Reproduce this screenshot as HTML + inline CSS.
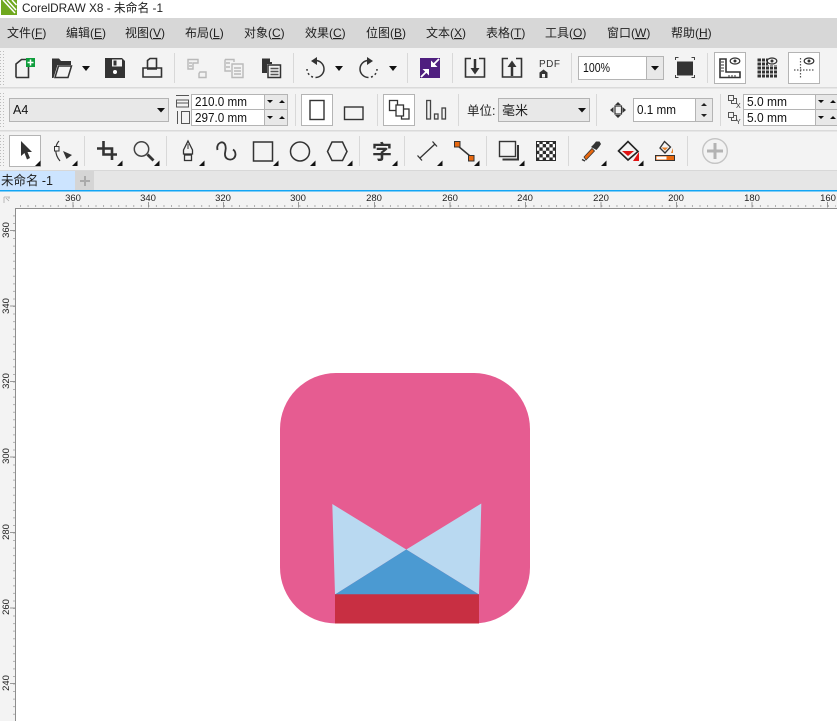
<!DOCTYPE html>
<html><head><meta charset="utf-8">
<style>
html,body{margin:0;padding:0;background:#fff;width:837px;height:721px;overflow:hidden}
svg{display:block}
text{font-family:"Liberation Sans","Noto Sans CJK SC",sans-serif;fill:#222}
.m{font-size:12px}
.m tspan{text-decoration:underline}
.n{font-size:12.5px;fill:#111}
.r{font-size:9.5px;fill:#999}
.s{stroke:#333;stroke-width:1.6;fill:none}
.g{stroke:#b9b9b9;stroke-width:1.4;fill:none}
.l{fill:#d8d8d8}
.b{fill:#fff;stroke:#b4b4b4;stroke-width:1}
</style></head>
<body>
<svg width="837" height="721" viewBox="0 0 837 721" xmlns="http://www.w3.org/2000/svg">
<defs>
<path id="c" d="M0 5H5.500V-.5z" fill="#111"/>
<pattern id="grip" width="3" height="3" patternUnits="userSpaceOnUse"><rect width="1" height="1" fill="#bdbdbd"/></pattern>
<pattern id="chk" width="6.700" height="6.700" patternUnits="userSpaceOnUse"><rect width="6.700" height="6.700" fill="#2b2b2b"/><rect width="3.350" height="3.350" fill="#fff"/><rect x="3.350" y="3.350" width="3.350" height="3.350" fill="#fff"/></pattern>
</defs>

<!-- base -->
<rect width="837" height="721" fill="#fff"/>
<!-- title bar -->
<rect x="1" y="0" width="16" height="15" fill="#6fa81e"/>
<path d="M3 0L15 13M7 0L16 10M12 0L16.500 5" stroke="#fff" stroke-width="1.500" fill="none"/>
<text x="22" y="12" style="font-size:12px" fill="#111" textLength="141" lengthAdjust="spacingAndGlyphs">CorelDRAW X8 - 未命名 -1</text>

<!-- menu -->
<rect y="18" width="837" height="30" fill="#d7d7d7"/>
<g class="m">
<text x="7" y="37">文件(<tspan>F</tspan>)</text>
<text x="66" y="37">编辑(<tspan>E</tspan>)</text>
<text x="125" y="37">视图(<tspan>V</tspan>)</text>
<text x="185" y="37">布局(<tspan>L</tspan>)</text>
<text x="244" y="37">对象(<tspan>C</tspan>)</text>
<text x="305" y="37">效果(<tspan>C</tspan>)</text>
<text x="366" y="37">位图(<tspan>B</tspan>)</text>
<text x="426" y="37">文本(<tspan>X</tspan>)</text>
<text x="486" y="37">表格(<tspan>T</tspan>)</text>
<text x="545" y="37">工具(<tspan>O</tspan>)</text>
<text x="607" y="37">窗口(<tspan>W</tspan>)</text>
<text x="671" y="37">帮助(<tspan>H</tspan>)</text>
</g>

<!-- toolbars background -->
<rect y="48" width="837" height="122" fill="#f3f3f3"/>
<rect y="87" width="837" height="1.500" fill="#dadada"/>
<rect y="130" width="837" height="1.500" fill="#dadada"/>
<rect y="50" width="6" height="36" fill="url(#grip)"/>
<rect y="92" width="6" height="36" fill="url(#grip)"/>
<rect y="133" width="6" height="35" fill="url(#grip)"/>

<!-- row1 separators -->
<g class="l">
<rect x="174" y="53" width="1" height="30"/><rect x="293" y="53" width="1" height="30"/><rect x="407" y="53" width="1" height="30"/><rect x="452" y="53" width="1" height="30"/><rect x="571" y="53" width="1" height="30"/><rect x="707" y="53" width="1" height="30"/>
</g>
<!-- new -->
<path class="s" d="M16 77.500V64L21.500 59.500H26M28.500 67V77.500H16"/>
<rect x="26" y="58" width="9" height="9" fill="#0f9d3c"/>
<path d="M30.500 59.500V65.500M27.500 62.500H33.500" stroke="#fff" stroke-width="1.500"/>
<!-- open -->
<path d="M52 78V58.500H59L61 61H71V65H57.500L53.500 78z" fill="#333"/>
<path d="M55 77.500L58.500 66H71.500L68 77.500z" fill="#f3f3f3" stroke="#333" stroke-width="1.500"/>
<path d="M82 66H90L86 71z" fill="#111"/>
<!-- save -->
<path d="M105 58H122L125 61V78H105z" fill="#333"/>
<rect x="112" y="59.500" width="10" height="7" fill="#f3f3f3"/><rect x="113.500" y="60.500" width="3" height="5" fill="#333"/>
<circle cx="115" cy="72" r="2" fill="#fff"/>
<!-- print -->
<path class="s" d="M147.500 68V60.500L150 58.500H156.500V68M143 68H147M157 68H161.500V77H143V68z"/>
<path d="M147 69H157" stroke="#333" stroke-width="1.500"/>
<!-- disabled -->
<g class="g">
<path d="M188 59.500H198V63H193V69H188z"/><path d="M189 63H192M189 66H192"/><path d="M200 72H206V77.500H199V73.500z"/>
<path d="M225 59.500H234V62M225 59.500V71H231M226 63H230M226 67H230"/><path d="M232 64H243V77.500H232z"/><path d="M234 68H241M234 71H241M234 74H241"/>
</g>
<path d="M262 58.500H270V62H272V64H267V73H262z" fill="#333"/>
<rect x="268" y="65" width="12.500" height="12.500" fill="#f3f3f3" stroke="#333" stroke-width="1.500"/>
<path d="M270.500 68.500H278.500M270.500 71.500H278.500M270.500 74.500H278.500" stroke="#555" stroke-width="1.500"/>
<!-- undo/redo -->
<path d="M315.500 60.500A8.500 8.500 0 0 1 315.500 77.500" fill="none" stroke="#333" stroke-width="1.500"/>
<path d="M313 77.100A8.500 8.500 0 0 1 307 69" fill="none" stroke="#333" stroke-width="1.500" stroke-dasharray="2 2.500"/>
<path d="M317 57V65L311 61z" fill="#333"/>
<path d="M335 66H343L339 71z" fill="#111"/>
<path d="M368.500 60.500A8.500 8.500 0 0 0 368.500 77.500" fill="none" stroke="#333" stroke-width="1.500"/>
<path d="M371 77.100A8.500 8.500 0 0 0 377 69" fill="none" stroke="#333" stroke-width="1.500" stroke-dasharray="2 2.500"/>
<path d="M367 57V65L373 61z" fill="#333"/>
<path d="M389 66H397L393 71z" fill="#111"/>
<!-- purple -->
<rect x="420" y="58" width="20" height="20" fill="#4f1f7f"/>
<path d="M421 77L426 72M439 59L434 64" stroke="#fff" stroke-width="1.800"/>
<path d="M431 67V60.500L437.500 67z" fill="#fff"/>
<path d="M429 69V75.500L422.500 69z" fill="#fff"/>
<!-- import export pdf -->
<path class="s" d="M471 58.500H465.500V77H484.500V58.500H479"/>
<path d="M475 59V70" stroke="#333" stroke-width="2.500"/><path d="M470.500 68H479.500L475 74.500z" fill="#333"/>
<path class="s" d="M508 58.500H502.500V77H521.500V58.500H516"/>
<path d="M512 66V76" stroke="#333" stroke-width="2.500"/><path d="M507.500 67H516.500L512 60.500z" fill="#333"/>
<text x="539" y="67" style="font-size:10px;letter-spacing:.5px;fill:#333">PDF</text>
<path d="M539.500 78V72.500L543.500 69.500L547.500 72.500V78z" fill="#333"/><rect x="542" y="74" width="3" height="3.500" fill="#f3f3f3"/>
<!-- zoom box -->
<rect x="578.500" y="56.500" width="68" height="23" fill="#fff" stroke="#b4b4b4"/>
<rect x="646.500" y="56.500" width="17" height="23" fill="#e8e8e8" stroke="#b4b4b4"/>
<path d="M651 66H659L655 70.500z" fill="#111"/>
<text x="583" y="72" class="n" textLength="27" lengthAdjust="spacingAndGlyphs">100%</text>
<!-- fullscreen -->
<rect x="677" y="61.500" width="16" height="14" fill="#333"/>
<path d="M675.500 60V57.500H678.500M691.500 57.500H694.500V60M694.500 75V77.500H691.500M678.500 77.500H675.500V75" fill="none" stroke="#444" stroke-width="1"/>
<!-- toggles -->
<rect x="714.500" y="52.500" width="31" height="31" class="b"/>
<path class="s" d="M720 59V77.500H740V72H726V59z" stroke-width="1.400"/>
<path d="M721 62H724M721 65H724M721 68H724M721 71H724M729 75V77M732 75V77M735 75V77" stroke="#333"/>
<ellipse cx="735" cy="61" rx="4.800" ry="3" fill="none" stroke="#333" stroke-width="1.200"/><circle cx="735" cy="61" r="1.500" fill="#333"/>
<path d="M757.500 58.500H768V65H777V77.500H757.500z" fill="#333"/>
<path d="M757 62H777M757 66H777M757 70H777M757 74H777M761.500 58V78M765.500 58V78M769.500 65V78M773.500 65V78" stroke="#f3f3f3" stroke-width="1"/>
<ellipse cx="772" cy="61" rx="4.800" ry="3" fill="none" stroke="#333" stroke-width="1.200"/><circle cx="772" cy="61" r="1.500" fill="#333"/>
<rect x="788.500" y="52.500" width="31" height="31" class="b"/>
<path d="M800.500 58V78M794 70H814" stroke="#555" stroke-width="1.200" stroke-dasharray="1.500 1.500"/>
<ellipse cx="809" cy="61" rx="4.800" ry="3" fill="none" stroke="#333" stroke-width="1.200"/><circle cx="809" cy="61" r="1.500" fill="#333"/>

<!-- row 2 -->
<rect x="9.500" y="98.500" width="159" height="23" fill="#e8e8e8" stroke="#b4b4b4"/>
<text x="13" y="114" class="n">A4</text>
<path d="M157 108H165L161 112.500z" fill="#111"/>
<path d="M176 95.500H189M176.500 100H188.500V107H176.500zM176.500 103H188.500" stroke="#555" fill="none"/>
<path d="M177.500 111V124M181.500 111.500H189.500V123.500H181.500z" stroke="#555" fill="none"/>
<rect x="191.500" y="94.500" width="73" height="15" fill="#fff" stroke="#b4b4b4"/>
<rect x="191.500" y="109.500" width="73" height="16" fill="#fff" stroke="#b4b4b4"/>
<rect x="264.500" y="94.500" width="23" height="31" fill="#e8e8e8" stroke="#b4b4b4"/>
<path d="M264.500 109.500H287.500" stroke="#b4b4b4"/>
<text x="195" y="106" class="n" textLength="52" lengthAdjust="spacingAndGlyphs">210.0 mm</text>
<text x="195" y="122" class="n" textLength="52" lengthAdjust="spacingAndGlyphs">297.0 mm</text>
<path d="M267 100H273L270 103zM279 103H285L282 100zM267 116H273L270 119zM279 119H285L282 116z" fill="#111"/>
<rect x="295" y="94" width="1" height="32" class="l"/>
<rect x="301.500" y="94.500" width="31" height="31" class="b"/>
<rect x="310" y="100.500" width="14" height="19" fill="none" stroke="#333" stroke-width="1.400"/>
<rect x="344.500" y="107" width="18.500" height="12.500" fill="none" stroke="#333" stroke-width="1.400"/>
<rect x="377" y="94" width="1" height="32" class="l"/>
<rect x="383.500" y="94.500" width="31" height="31" class="b"/>
<rect x="389.500" y="100.500" width="8" height="10" fill="#fff" stroke="#333" stroke-width="1.300"/>
<rect x="401.500" y="109" width="7.500" height="10" fill="#fff" stroke="#333" stroke-width="1.300"/>
<rect x="396" y="105" width="7.500" height="11" fill="#fff" stroke="#333" stroke-width="1.300"/>
<rect x="426.700" y="100.500" width="3.800" height="18.500" fill="none" stroke="#444" stroke-width="1.300"/>
<rect x="434.500" y="114" width="3.500" height="5" fill="none" stroke="#444" stroke-width="1.300"/>
<rect x="442" y="108" width="3.500" height="11" fill="none" stroke="#444" stroke-width="1.300"/>
<rect x="458" y="94" width="1" height="32" class="l"/>
<text x="467" y="115" style="font-size:12.500px">单位:</text>
<rect x="498.500" y="98.500" width="91" height="23" fill="#e8e8e8" stroke="#b4b4b4"/>
<text x="502" y="115" style="font-size:13px">毫米</text>
<path d="M578 108H586L582 112.500z" fill="#111"/>
<rect x="596" y="94" width="1" height="32" class="l"/>
<rect x="615" y="106" width="6.500" height="8" fill="none" stroke="#333" stroke-width="1.200"/>
<path d="M618 102L621 105H615zM618 118L621 115H615zM610 110L613.500 107V113zM626 110L622.500 107V113z" fill="#333"/>
<rect x="633.500" y="98.500" width="62" height="23" fill="#fff" stroke="#b4b4b4"/>
<rect x="695.500" y="98.500" width="17" height="23" fill="#e8e8e8" stroke="#b4b4b4"/>
<text x="637" y="114" class="n" textLength="39" lengthAdjust="spacingAndGlyphs">0.1 mm</text>
<path d="M701 106H707L704 103zM701 114H707L704 117z" fill="#222"/>
<rect x="720" y="94" width="1" height="32" class="l"/>
<path d="M728.500 95.500H733.500V100.500H728.500zM731.500 100.500V103.500H736.500V98.500H733.500M728.500 112.500H733.500V117.500H728.500zM731.500 117.500V120.500H736.500V115.500H733.500" fill="none" stroke="#555"/>
<text x="736" y="108" style="font-size:7px;fill:#333">X</text>
<text x="736" y="124" style="font-size:7px;fill:#333">Y</text>
<rect x="743.500" y="94.500" width="72" height="15" fill="#fff" stroke="#b4b4b4"/>
<rect x="743.500" y="109.500" width="72" height="16" fill="#fff" stroke="#b4b4b4"/>
<rect x="815.500" y="94.500" width="23" height="31" fill="#e8e8e8" stroke="#b4b4b4"/>
<path d="M815.500 109.500H838" stroke="#b4b4b4"/>
<text x="747" y="106" class="n" textLength="40" lengthAdjust="spacingAndGlyphs">5.0 mm</text>
<text x="747" y="122" class="n" textLength="40" lengthAdjust="spacingAndGlyphs">5.0 mm</text>
<path d="M818 100H824L821 103zM830 103H836L833 100zM818 116H824L821 119zM830 119H836L833 116z" fill="#111"/>

<!-- row 3 -->
<rect x="9.500" y="135.500" width="31" height="31" class="b"/>
<path d="M21 141V156L24.500 153L27 159.500L30 158L27.500 152H32z" fill="#333"/>
<g class="l">
<rect x="84" y="136" width="1" height="30"/><rect x="166" y="136" width="1" height="30"/><rect x="359" y="136" width="1" height="30"/><rect x="404" y="136" width="1" height="30"/><rect x="486" y="136" width="1" height="30"/><rect x="568" y="136" width="1" height="30"/><rect x="687" y="136" width="1" height="30"/>
</g>
<path d="M59 141C55 145 54 154 60 161" fill="none" stroke="#333" stroke-width="1.200"/>
<rect x="54.500" y="146.500" width="4.500" height="4.500" fill="#f3f3f3" stroke="#333"/>
<path d="M63 151L72 155L66.500 159z" fill="#333"/>
<path d="M97 148.500H112V160M103.500 141V154.500H117" fill="none" stroke="#333" stroke-width="2.600"/>
<circle cx="141.500" cy="149" r="7.200" fill="none" stroke="#444" stroke-width="1.500"/>
<path d="M147.500 154.500L153.500 160.500" stroke="#333" stroke-width="2.800"/>
<path d="M188 141L192.500 150V154H183.500V150z" fill="none" stroke="#333" stroke-width="1.300"/>
<path d="M188 144V149" stroke="#333"/>
<rect x="184.500" y="155" width="7" height="5.500" fill="none" stroke="#333" stroke-width="1.300"/>
<path d="M217.500 150C215.500 143 224 139 225.500 146C226.500 150 224.500 152 225 155C225.500 161 235 161.500 235.500 154.500C235.500 152 234.500 150.500 233 149.500" fill="none" stroke="#333" stroke-width="1.800"/>
<rect x="253.500" y="142" width="19" height="19" fill="none" stroke="#333" stroke-width="1.500"/>
<circle cx="300" cy="151.500" r="9.500" fill="none" stroke="#333" stroke-width="1.500"/>
<path d="M332 142H342.500L347 151.500L342.500 160.500H332L327.500 151.500z" fill="none" stroke="#333" stroke-width="1.500"/>
<text x="372" y="159" style="font-size:20px;font-weight:700;fill:#333">字</text>
<path d="M420 158L435 144M417.500 155.500L422 160.500M432.500 141.500L437 146.500" fill="none" stroke="#333" stroke-width="1.300"/>
<path d="M458 146L470 156" stroke="#333" stroke-width="1.500"/>
<rect x="454.500" y="141.500" width="5.500" height="5.500" fill="#e8680f" stroke="#333"/>
<rect x="468.500" y="155.500" width="5.500" height="5.500" fill="#e8680f" stroke="#333"/>
<rect x="499.500" y="141.500" width="16" height="15" fill="#f3f3f3" stroke="#333" stroke-width="1.400"/>
<path d="M517 145V158.500H502.500V160.500H519V145z" fill="#333"/>
<rect x="536" y="141" width="20" height="20" fill="url(#chk)"/>
<rect x="536.500" y="141.500" width="19" height="19" fill="none" stroke="#2b2b2b"/>
<path d="M584 157L592 148.500L594.500 151L586 160z" fill="#e8680f" stroke="#333" stroke-width=".8"/>
<path d="M582 159.500L585 161" stroke="#333" stroke-width="1.500"/>
<path d="M591 147L594 144L596 141.500H599.500L601 144L599 147L596.500 150z" fill="#333"/>
<path d="M618.500 151L628 141.500L638 151.500L628 160z" fill="#f3f3f3" stroke="#222" stroke-width="1.600"/>
<path d="M622 151H634L628 156z" fill="#e01414"/>
<path d="M639 152V161H633z" fill="#e01414"/>
<path d="M660 148L664.500 141.500L670.500 147L665 153z" fill="#f3f3f3" stroke="#333" stroke-width="1.300"/>
<path d="M661.500 147.500H668L665 150.500z" fill="#e8812a"/>
<path d="M673 148V153H671z" fill="#e8812a"/>
<rect x="655.500" y="155.500" width="19" height="5" fill="#e8680f" stroke="#333"/>
<rect x="656.500" y="156.500" width="10" height="3" fill="#fff"/>
<circle cx="715" cy="151" r="12.300" fill="none" stroke="#c4c4c4" stroke-width="1.400"/>
<path d="M715 143V159M707 151H723" stroke="#b3b3b3" stroke-width="3"/>
<!-- corner triangles -->
<g fill="#111">
<use href="#c" x="35" y="161"/><use href="#c" x="72" y="161"/><use href="#c" x="117" y="161"/><use href="#c" x="154" y="161"/>
<use href="#c" x="199" y="161"/><use href="#c" x="273" y="161"/><use href="#c" x="310" y="161"/><use href="#c" x="347" y="161"/>
<use href="#c" x="392" y="161"/><use href="#c" x="437" y="161"/><use href="#c" x="474" y="161"/><use href="#c" x="519" y="161"/>
<use href="#c" x="601" y="161"/><use href="#c" x="638" y="161"/>
</g>

<!-- tab bar -->
<rect y="170" width="837" height="20" fill="#e6e6e6"/>
<rect y="170" width="837" height="1" fill="#d8d8d8"/>
<rect y="171" width="75" height="19" fill="#cce4ff"/>
<rect x="75" y="171" width="19" height="19" fill="#d5d5d5"/>
<path d="M85 176V186M80 181H90" stroke="#aaa" stroke-width="2"/>
<text x="1" y="185" style="font-size:13px" fill="#111" textLength="52" lengthAdjust="spacingAndGlyphs">未命名 -1</text>
<rect y="190" width="837" height="1.500" fill="#12a5f4"/>

<!-- rulers -->
<rect y="191.500" width="837" height="17" fill="#f3f3f3"/>
<rect y="191.500" width="15" height="530" fill="#f3f3f3"/>
<rect x="15" y="208" width="822" height="1" fill="#8e8e8e"/>
<rect x="15" y="208" width="1" height="513" fill="#8e8e8e"/>
<path d="M4 197H10M4 197V203M6 198L9 201M9 197V199" stroke="#aaa" stroke-width=".8" fill="none"/>
<!-- horiz ruler -->
<g class="r" text-anchor="middle">
<text x="73" y="201">360</text><text x="148" y="201">340</text><text x="223" y="201">320</text><text x="298" y="201">300</text><text x="374" y="201">280</text><text x="450" y="201">260</text><text x="525" y="201">240</text><text x="601" y="201">220</text><text x="676" y="201">200</text><text x="752" y="201">180</text><text x="828" y="201">160</text>
</g>
<path d="M73 202V207.500M148.500 202V207.500M223.500 202V207.500M298.500 202V207.500M374.500 202V207.500M450 202V207.500M525.500 202V207.500M601 202V207.500M676.500 202V207.500M752 202V207.500M827.500 202V207.500" stroke="#999" stroke-width="1"/>
<path d="M20 206H836" stroke="#888" stroke-width="1.200" stroke-dasharray="1 6.550"/>
<!-- vert ruler -->
<g class="r" text-anchor="middle">
<text transform="translate(9 230) rotate(-90)">360</text>
<text transform="translate(9 306) rotate(-90)">340</text>
<text transform="translate(9 381) rotate(-90)">320</text>
<text transform="translate(9 456) rotate(-90)">300</text>
<text transform="translate(9 532) rotate(-90)">280</text>
<text transform="translate(9 607) rotate(-90)">260</text>
<text transform="translate(9 683) rotate(-90)">240</text>
</g>
<path d="M10 230.500H15M10 306H15M10 381.500H15M10 457H15M10 532.500H15M10 608H15M10 683.500H15" stroke="#999"/>
<path d="M14 215.400V721" stroke="#888" stroke-width="1.200" stroke-dasharray="1 6.550"/>

<!-- artwork -->
<rect x="280" y="373" width="250" height="250.500" rx="56" ry="56" fill="#e65c91"/>
<path d="M332.300 504L406.300 549.500L335 594.500zM481.300 503.500L406.300 549.500L479 594.500z" fill="#b9d9f1"/>
<path d="M406.300 549.500L335 594.500H479z" fill="#4b9ad2"/>
<path d="M335 594.300H479V623.500H335z" fill="#c82f42"/>
</svg>
</body></html>
